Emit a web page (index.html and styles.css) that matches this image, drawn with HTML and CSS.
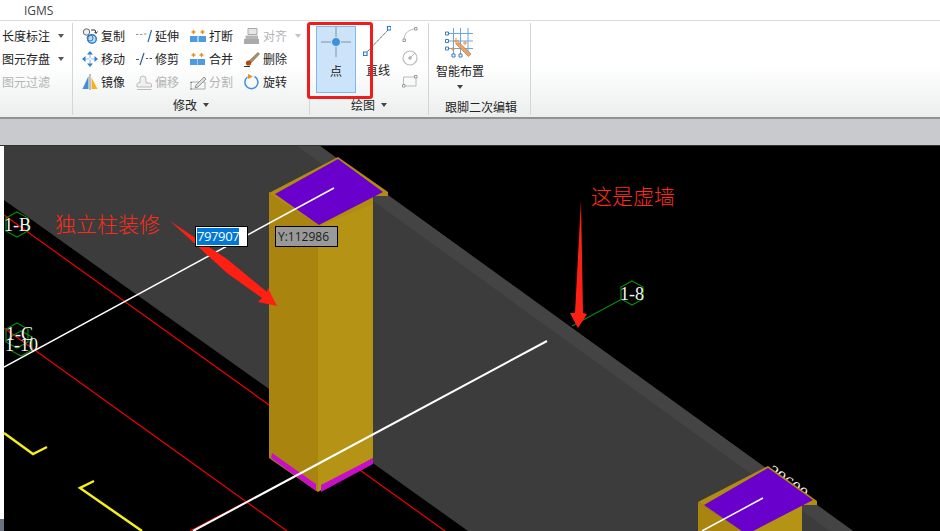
FILE: index.html
```html
<!DOCTYPE html>
<html lang="zh">
<head>
<meta charset="utf-8">
<title>IGMS</title>
<link rel="stylesheet" href="styles.css">
</head>
<body>
<header class="titlebar">IGMS</header>
<section class="ribbon">
  <div class="group g-1">
    <div class="rows">
      <div class="tool">长度标注<i class="caret"></i></div>
      <div class="tool">图元存盘<i class="caret"></i></div>
      <div class="tool off">图元过滤</div>
    </div>
  </div>
  <div class="group g-2">
    <div class="grid">
      <div class="tool"><svg class="ic" viewBox="0 0 16 16"><circle cx="4.500" cy="4" r="3.200" fill="#eee" stroke="#667"/><circle cx="10" cy="11" r="4.300" fill="#bcd9f2" stroke="#2f7cc4" stroke-width="1.400"/><circle cx="8" cy="10" r="3" fill="none" stroke="#2f7cc4"/><path d="M9 2h4l1 3M12.500 4l1.500 1.500L15.500 3.500" fill="none" stroke="#333"/></svg>复制</div>
      <div class="tool"><svg class="ic" viewBox="0 0 16 16"><path d="M0 6.500h2.500M4 6.500h2.500M8 6h2.500" stroke="#8c97a3" fill="none"/><path d="M12 14L15.500 2" stroke="#2a6fb5" stroke-width="1.200" fill="none"/></svg>延伸</div>
      <div class="tool"><svg class="ic" viewBox="0 0 16 16"><path d="M0 8h7.500v6H0zM8.500 8H16v6H8.500z" fill="#4f9be0"/><path d="M3.500 2v4M1.500 4h4M12.500 2v4M10.500 4h4" stroke="#ee8a1e" stroke-width="1.400"/></svg>打断</div>
      <div class="tool off"><svg class="ic" viewBox="0 0 16 16"><path d="M1.500 7.500V11H14V7.500z" fill="#b6b6b6"/><path d="M4 .5h9v6H4z" fill="#e6e6e6" stroke="#aaa"/><path d="M0 11h15v5H0z" fill="#aaa"/></svg>对齐<i class="caret soft"></i></div>

      <div class="tool"><svg class="ic" viewBox="0 0 16 16"><path d="M8 0l3 3.500H9V7h3.500V5L16 8l-3.500 3V9H9v3.500h2L8 16l-3-3.500h2V9H3.500v2L0 8l3.500-3v2H7V3.500H5z" fill="#2f80cc"/><path d="M7.300 3.500h1.400v3.800h3.800v1.400H8.700v3.800H7.300V8.700H3.500V7.300h3.800z" fill="#fff"/></svg>移动</div>
      <div class="tool"><svg class="ic" viewBox="0 0 16 16"><path d="M0 8.500h3M10 7.500h2M13.500 7.500H16" stroke="#555" fill="none"/><path d="M4 14L8 2" stroke="#2a5f9c" stroke-width="1.200" fill="none"/></svg>修剪</div>
      <div class="tool"><svg class="ic" viewBox="0 0 16 16"><path d="M0 8h15v6H0z" fill="#4f9be0"/><path d="M7.500 8v6" stroke="#9ccaf0"/><path d="M3.500 2v4M1.500 4h4M11.500 2v4M9.500 4h4" stroke="#ee8a1e" stroke-width="1.400"/></svg>合并</div>
      <div class="tool"><svg class="ic" viewBox="0 0 16 16"><path d="M5 10L14 1.500l1.500 1.500L7 12z" fill="#a9926a" stroke="#6e5a3c" stroke-width=".6"/><circle cx="4.500" cy="12" r="2.600" fill="#b5451c"/><path d="M0 15.500h6" stroke="#333"/></svg>删除</div>

      <div class="tool"><svg class="ic" viewBox="0 0 16 16"><path d="M6.500 2v13H.5z" fill="#3f8fdc"/><path d="M9.500 3.500L15.500 15h-6z" fill="#f7b21b"/><path d="M8 0v16" stroke="#888"/></svg>镜像</div>
      <div class="tool off"><svg class="ic" viewBox="0 0 16 16"><path d="M4 9V5a3 3 0 016 0v4h3.500a2 2 0 012 2v2H1v-2a2 2 0 013-2z" fill="#f0f0f0" stroke="#bbb"/><path d="M1 15.500h14.500" stroke="#bbb"/></svg>偏移</div>
      <div class="tool off"><svg class="ic" viewBox="0 0 16 16"><path d="M1 8h14v7H1z" fill="none" stroke="#aaa"/><path d="M6 11l8-8 2 2-8 8-3 1z" fill="#ddd" stroke="#999"/><path d="M0 8.500h2M0 15h2" stroke="#888"/></svg>分割</div>
      <div class="tool"><svg class="ic" viewBox="0 0 16 16"><path d="M10.500 2.500a6.500 6.500 0 11-7 .5" fill="none" stroke="#3f8fdc" stroke-width="1.500"/><path d="M4 0l5 2.500L4 5z" fill="#ee8a1e"/></svg>旋转</div>
    </div>
    <div class="group-label">修改<i class="caret dark"></i></div>
  </div>
  <div class="group g-3">
    <div class="draw">
      <div class="big selected">
        <svg class="big-ic" viewBox="0 0 30 30"><path d="M0 15h30M15 0v30" stroke="#8a9099"/><circle cx="15" cy="15" r="4.500" fill="#3f8fdc" stroke="#cfe4f7"/></svg>
        <span>点</span>
      </div>
      <div class="big line">
        <svg class="line-ic" viewBox="0 0 28 30"><path d="M2 28L27 2" stroke="#555" stroke-dasharray="1.500 .5"/><path d="M.5 26h3.500v3.500H.5zM24.500 .5H28V4h-3.500z" fill="#fff" stroke="#2f7cc4" stroke-width="1.200"/></svg>
        <span>直线</span>
      </div>
      <div class="mini">
        <svg class="ic" viewBox="0 0 16 16"><path d="M2 13C2 6 7 2 14 2" fill="none" stroke="#bbb"/><path d="M1 12h2.500v2.500H1zM12.500 .5H15V3h-2.500z" fill="#fff" stroke="#999"/></svg>
        <svg class="ic" viewBox="0 0 16 16"><circle cx="8" cy="8" r="7" fill="none" stroke="#bbb" stroke-width="1.200"/><path d="M7 7h2v2H7z" fill="#fff" stroke="#999"/><path d="M9 7l4-4" stroke="#bbb"/></svg>
        <svg class="ic" viewBox="0 0 16 16"><path d="M1.500 4H14v9H1.500z" fill="none" stroke="#bbb"/><path d="M.5 11.500H3V14H.5zM12.500 2.500H15V5h-2.500z" fill="#fff" stroke="#999"/></svg>
      </div>
    </div>
    <div class="group-label">绘图<i class="caret dark"></i></div>
    <div class="highlight"></div>
  </div>
  <div class="group g-4">
    <div class="smart">
      <svg class="smart-ic" viewBox="0 0 30 30"><path d="M3 5.500h25M3 13h25M3 20.500h25M8.500 0v27M15.500 0v27M23 0v27" stroke="#6aa6e2" fill="none"/><path d="M.5 4h3v3h-3zM.5 11.500h3v3h-3zM.5 19h3v3h-3zM7 26h3v3H7zM14 26h3v3h-3z" fill="#fff" stroke="#3b7cc0"/><path d="M11 16l2.500-2L26 26l-2.500 2.500z" fill="#e6a26b" stroke="#c9682a" stroke-width=".6"/><path d="M8 13h6M11 10v6M6 21h4M8 19v4M18 15h4M20 13v4" stroke="#ee8a3a"/></svg>
      <span>智能布置</span>
      <i class="caret dark"></i>
    </div>
    <div class="group-label low">跟脚二次编辑</div>
  </div>
</section>
<div class="strip"></div>
<main class="viewport">
  <div class="edge"><div class="edge-foot"></div></div>
  <div class="scene">
    <svg class="scene-svg" viewBox="4 146 936 385">
      <text class="lbl" transform="translate(766 474) rotate(36)" x="0" y="0">39600</text>
      <path class="wall" d="M4 200V146H320L853 531H468Z"/>
      <path class="wall-top" d="M297 146H320L853 531H830Z"/>

      <path class="red" d="M4 215L445 531M4 328L287 531M190 531L300 474"/>
      <path class="grn" d="M572 326L622 299"/>
      <path class="hex" d="M17 212l11 6v13l-11 6-11-6v-13zM17 323l11 6v13l-11 6-11-6v-13zM21 331l11 6v13l-11 6-11-6v-13zM632 281l11 6v12l-11 6-11-6v-12z"/>
      <text class="lbl" x="4" y="231">1-B</text>
      <text class="lbl" x="6" y="340">1-C</text>
      <text class="lbl" x="5" y="351">1-10</text>
      <text class="lbl" x="620" y="300">1-8</text>

      <path class="yel" d="M4 433L33 454L47 447M94 481L80 488L142 531"/>

      <path class="col-l" d="M269 192L318 225V492L269 458Z"/>
      <path class="col-r" d="M318 225L373 192V458L318 492Z"/>
      <path class="mag" d="M272 453L316 484V491L271 458ZM321 485L373 458V464L321 492Z"/>
      <path class="cap" d="M269 193L338 157L388 192V196L373 196V204L319 226Z"/>
      <path class="vio" d="M275 194L338 159L383 192L319 225Z"/>
      <path class="wht" d="M4 367L334 188"/>
      <path class="wht2" d="M193 531L547 341"/>

      <path class="col-l" d="M698 502L742 531H698Z"/>
      <path class="col-r" d="M753 531L802 505V531Z"/>
      <path class="cap" d="M698 502L768 466L817 501V505L802 505L753 531H742Z"/>
      <path class="vio" d="M704 505L768 468L813 500L753 531H742Z"/>
      <path class="wht" d="M702 531L763 498"/>

      <path class="arrow" d="M170 221L227 259L267 292L268 288L277 306L258 302L262 298L227 273Z"/>
      <path class="arrow" d="M581 200L583 313L587 314L578 328L570 313L575 313Z"/>
      <text class="note" x="55" y="232">独立柱装修</text>
      <text class="note" x="591" y="204">这是虚墙</text>
    </svg>
    <div class="coord-x"><span>797907</span></div>
    <div class="coord-y">Y:112986</div>
  </div>
</main>
</body>
</html>
```

FILE: styles.css
```css
* { box-sizing: border-box; }
html, body { margin: 0; height: 100%; overflow: hidden; }
body {
  display: flex;
  flex-direction: column;
  width: 940px;
  height: 531px;
  background: #000;
  font: 12px/16px "Noto Sans CJK SC", "Liberation Sans", sans-serif;
  color: #222;
}
.titlebar {
  height: 21px;
  padding-left: 24px;
  background: #fff;
  border-bottom: 1px solid #dcdcdc;
  font: 12px/21px "Open Sans", "Liberation Sans", sans-serif;
  color: #444;
  flex: none;
}
.ribbon {
  display: flex;
  height: 98px;
  flex: none;
  padding-top: 2px;
  background: linear-gradient(#fff 0, #fff 45%, #eceeee 100%);
  border-bottom: 2px solid #8e9295;
}
.group {
  position: relative;
  display: flex;
  flex-direction: column;
  height: 92px;
  border-right: 1px solid #d3d5d6;
}
.g-1 { width: 73px; padding-left: 2px; }
.g-2 { width: 237px; padding-left: 9px; }
.g-3 { width: 119px; }
.g-4 { width: 102px; }
.rows { display: grid; grid-auto-rows: 23px; padding-top: 1px; }
.grid {
  display: grid;
  grid-template-columns: repeat(4, 54px);
  grid-auto-rows: 23px;
  height: 70px;
  padding-top: 1px;
}
.tool {
  display: flex;
  align-items: center;
  gap: 3px;
  white-space: nowrap;
}
.off { color: #b4b4b4; }
.ic { width: 16px; height: 16px; flex: none; display: block; }
.caret {
  display: inline-block;
  width: 0;
  height: 0;
  margin-left: 5px;
  border: 3px solid transparent;
  border-top: 4px solid #555;
  border-bottom: 0;
}
.caret.soft { border-top-color: #c4c4c4; }
.caret.dark { border-top-color: #444; }
.group-label {
  display: flex;
  align-items: center;
  justify-content: center;
  height: 16px;
  margin-top: 4px;
}
.group-label .caret { margin-left: 6px; border-width: 3.5px; border-top-width: 4px; border-bottom-width: 0; }
.g-2 .group-label { margin-left: -9px; }
.g-3 .group-label { margin-top: 1px; }
.draw { display: flex; height: 73px; padding: 3px 0 0 6px; }
.big {
  display: flex;
  flex-direction: column;
  align-items: center;
  width: 40px;
  height: 67px;
}
.big span { margin-top: 6px; }
.selected { background: #cce4f9; border: 1px solid #7fb8ea; }
.big-ic { width: 30px; height: 30px; display: block; }
.line { width: 44px; }
.line-ic { width: 28px; height: 30px; display: block; margin: 0 0 0 -2px; flex: none; }
.mini {
  display: flex;
  flex-direction: column;
  gap: 7px;
  padding-top: 1px;
  margin-left: 2px;
}
.highlight {
  position: absolute;
  left: -3px;
  top: -1px;
  width: 66px;
  height: 77px;
  border: 3px solid #ee1c1c;
  border-radius: 3px;
}
.smart {
  display: flex;
  flex-direction: column;
  align-items: center;
  align-self: flex-start;
  width: 62px;
  height: 74px;
  padding-top: 5px;
}
.smart-ic { width: 30px; height: 30px; display: block; }
.smart span { margin-top: 5px; }
.smart .caret { margin: 6px 0 0; }
.group-label.low { margin-top: 3px; padding-left: 16px; justify-content: flex-start; }
.strip { height: 26px; flex: none; background: #c8cacd; }
.viewport { display: flex; height: 386px; flex: none; border-top: 1px solid #333; }
.edge { position: relative; width: 4px; background: #fff; flex: none; }
.edge-foot { position: absolute; left: 0; bottom: 0; width: 4px; height: 12px; background: #6b7380; }
.scene { position: relative; flex: 1; background: #000; overflow: hidden; }
.scene-svg { display: block; width: 936px; height: 385px; }
.wall { fill: #3c3c3c; }
.wall-top { fill: #444; }
.red { fill: none; stroke: #f00000; stroke-width: 1.200; }
.grn { fill: none; stroke: #0a8a0a; stroke-width: 1.200; }
.hex { fill: none; stroke: #0a8a0a; stroke-width: 1.200; }
.lbl { font: 18px "Liberation Serif", serif; fill: #f2f2f2; }
.yel { fill: none; stroke: #f5ee1e; stroke-width: 2.500; }
.col-l { fill: #a9850f; }
.col-r { fill: #b59314; }
.mag { fill: #c80fc8; }
.cap { fill: #b08c10; }
.vio { fill: #6a00cc; }
.wht { fill: none; stroke: #fff; stroke-width: 1.500; }
.wht2 { fill: none; stroke: #fff; stroke-width: 2; }
.arrow { fill: #ff2014; }
.note { font: 300 21px "Noto Sans CJK SC", sans-serif; fill: #ff2a1a; }
.coord-x {
  position: absolute;
  left: 191px;
  top: 80px;
  width: 53px;
  height: 21px;
  padding: 1px;
  background: #fff;
  border: 1px solid #000;
  font: 13px/17px "Open Sans", "Liberation Sans", sans-serif;
}
.coord-x span { display: block; width: 42px; height: 17px; background: #0078d7; color: #fff; letter-spacing: -.4px; }
.coord-y {
  position: absolute;
  left: 271px;
  top: 80px;
  width: 63px;
  height: 21px;
  padding-left: 2px;
  background: #999;
  border: 1px solid #000;
  color: #1c1c1c;
  font: 12px/19px "Open Sans", "Liberation Sans", sans-serif;
}
```
